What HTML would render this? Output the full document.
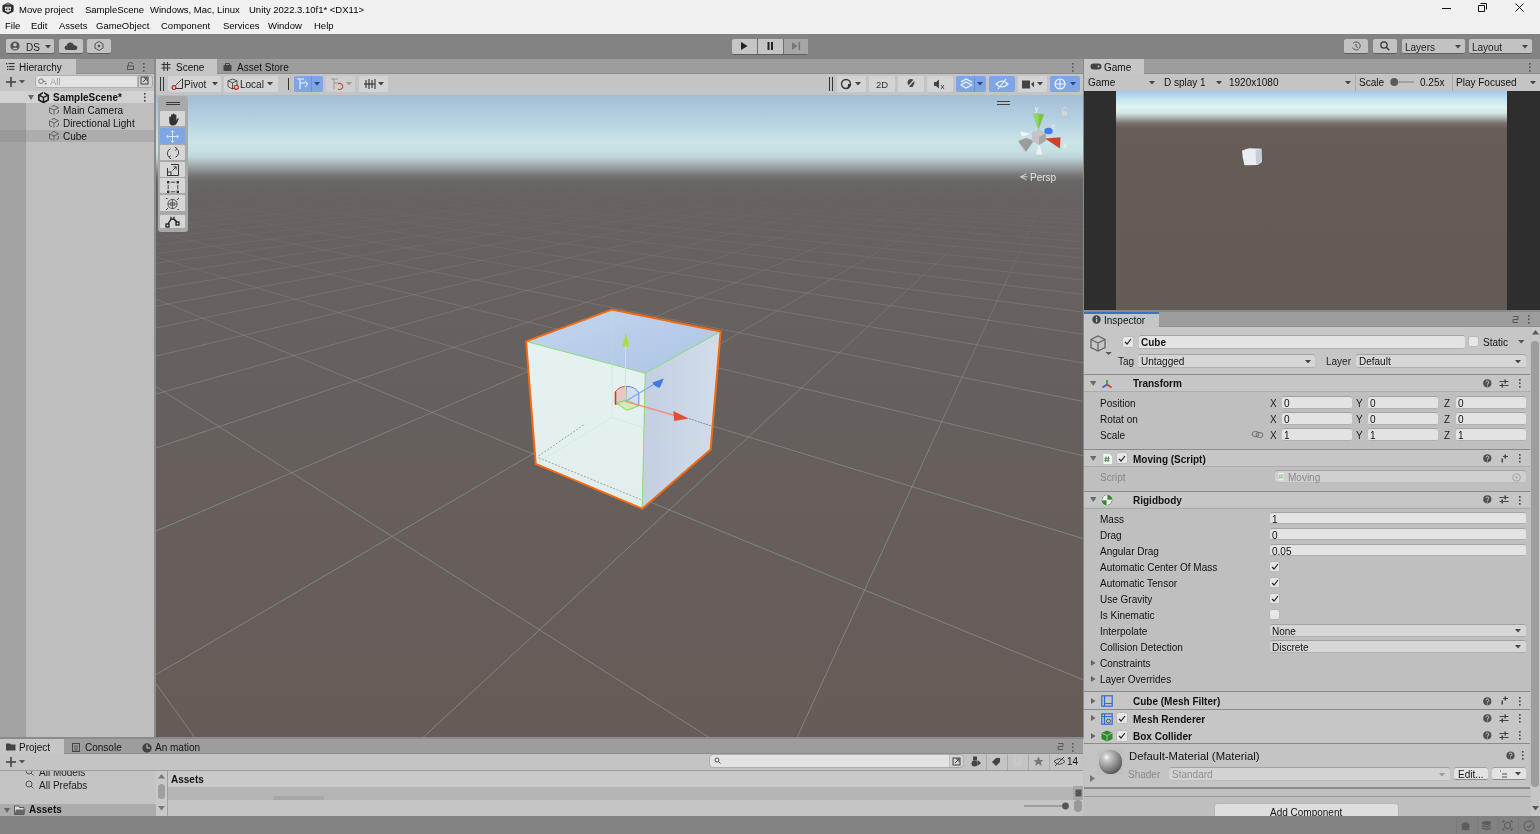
<!DOCTYPE html>
<html><head><meta charset="utf-8"><style>
html,body{margin:0;padding:0;width:1540px;height:834px;overflow:hidden;background:#c2c2c2;font-family:"Liberation Sans",sans-serif;}
body>div{position:absolute;}
.t{position:absolute;white-space:nowrap;line-height:1;will-change:transform;}
</style></head><body>
<div style="left:0px;top:0px;width:1540px;height:34px;background:#f0f0f0;"></div>
<svg style="position:absolute;left:2px;top:2px;" width="12" height="13" viewBox="0 0 12 13"><path d="M6 0.4L11.6 3.4V9.4L6 12.3L0.4 9.4V3.4Z" fill="#2a2a2a"/><path d="M6 0.4L9 2L6 3.5L3 2Z" fill="#777"/><path d="M3 4.8H9V8.8L6 10.6L3 8.8Z" fill="#dcdcdc"/><circle cx="4.5" cy="7.3" r="0.9" fill="#333"/><circle cx="7.5" cy="7.3" r="0.9" fill="#333"/><rect x="5.4" y="4.8" width="1.2" height="1.8" fill="#888"/></svg>
<div class="t" style="left:18.7px;top:5.1px;font-size:9.5px;color:#000;">Move project</div>
<div class="t" style="left:85.3px;top:5.1px;font-size:9.5px;color:#000;">SampleScene</div>
<div class="t" style="left:150.2px;top:5.1px;font-size:9.5px;color:#000;">Windows, Mac, Linux</div>
<div class="t" style="left:249.4px;top:5.1px;font-size:9.5px;color:#000;">Unity 2022.3.10f1* &lt;DX11&gt;</div>
<div class="t" style="left:5.3px;top:21.49px;font-size:9.5px;color:#000;">File</div>
<div class="t" style="left:31.2px;top:21.49px;font-size:9.5px;color:#000;">Edit</div>
<div class="t" style="left:58.9px;top:21.49px;font-size:9.5px;color:#000;">Assets</div>
<div class="t" style="left:96.1px;top:21.49px;font-size:9.5px;color:#000;">GameObject</div>
<div class="t" style="left:160.5px;top:21.49px;font-size:9.5px;color:#000;">Component</div>
<div class="t" style="left:223px;top:21.49px;font-size:9.5px;color:#000;">Services</div>
<div class="t" style="left:267.9px;top:21.49px;font-size:9.5px;color:#000;">Window</div>
<div class="t" style="left:314.3px;top:21.49px;font-size:9.5px;color:#000;">Help</div>
<svg style="position:absolute;left:1442px;top:8px;" width="10" height="2" viewBox="0 0 10 2"><rect width="9" height="1" fill="#111"/></svg>
<svg style="position:absolute;left:1478px;top:3px;" width="10" height="10" viewBox="0 0 10 10"><path d="M2.5 0.5H8.5V6.5M0.5 2.5H6.5V8.5H0.5Z" stroke="#111" fill="none" stroke-width="1"/></svg>
<svg style="position:absolute;left:1515px;top:3px;" width="10" height="10" viewBox="0 0 10 10"><path d="M0.5 0.5L8.5 8.5M8.5 0.5L0.5 8.5" stroke="#111" stroke-width="1"/></svg>
<div style="left:0px;top:34px;width:1540px;height:25px;background:#838383;"></div>
<div style="left:6px;top:38.6px;width:48px;height:14.600000000000001px;background:#c2c2c2;border-radius:2px;border-bottom:1px solid #5e5e5e"></div>
<div style="left:58.8px;top:38.6px;width:24.200000000000003px;height:14.600000000000001px;background:#c2c2c2;border-radius:2px;border-bottom:1px solid #5e5e5e"></div>
<div style="left:87px;top:38.6px;width:24px;height:14.600000000000001px;background:#c2c2c2;border-radius:2px;border-bottom:1px solid #5e5e5e"></div>
<svg style="position:absolute;left:10px;top:41px;" width="10" height="10" viewBox="0 0 10 10"><circle cx="5" cy="5" r="4.6" fill="#555"/><circle cx="5" cy="3.8" r="1.8" fill="#c5c5c5"/><path d="M2 8.2Q5 5.5 8 8.2" fill="#c5c5c5"/></svg>
<div class="t" style="left:26px;top:42.5px;font-size:10px;color:#222;">DS</div>
<svg style="position:absolute;left:45px;top:45px" width="6" height="3.5"><polygon points="0,0 6,0 3.0,3.5" fill="#444"/></svg>
<svg style="position:absolute;left:64px;top:41px;" width="14" height="10" viewBox="0 0 14 10"><path d="M3 9Q0.5 9 0.5 6.8Q0.5 4.8 2.8 4.6Q3.3 1.5 6.5 1.5Q9.2 1.5 10 4.2Q13.3 4.2 13.3 6.8Q13.3 9 11 9Z" fill="#444"/></svg>
<svg style="position:absolute;left:94px;top:41px;" width="10" height="10" viewBox="0 0 10 10"><path d="M5 0.5L9 2.8V7.2L5 9.5L1 7.2V2.8Z" stroke="#555" fill="none"/><circle cx="5" cy="5" r="1.3" fill="#555"/></svg>
<div style="left:731.5px;top:38.6px;width:76px;height:15px;border-radius:2px;background:#c5c5c5;border-bottom:1px solid #5e5e5e"></div>
<div style="left:757px;top:38.6px;width:1px;height:15.6px;background:#6e6e6e;"></div>
<div style="left:783px;top:38.6px;width:1px;height:15.6px;background:#6e6e6e;"></div>
<div style="left:783.5px;top:38.6px;width:24px;height:15.6px;background:#a6a6a6;"></div>
<svg style="position:absolute;left:741px;top:42px;" width="7" height="8" viewBox="0 0 7 8"><polygon points="0,0 6.5,4 0,8" fill="#222"/></svg>
<svg style="position:absolute;left:767px;top:42px;" width="7" height="8" viewBox="0 0 7 8"><rect x="0.5" width="2" height="8" fill="#222"/><rect x="4" width="2" height="8" fill="#222"/></svg>
<svg style="position:absolute;left:792px;top:42px;" width="9" height="8" viewBox="0 0 9 8"><polygon points="0,0 5.5,4 0,8" fill="#777"/><rect x="6.5" width="1.6" height="8" fill="#777"/></svg>
<div style="left:1343.6px;top:38.6px;width:24.700000000000045px;height:14.600000000000001px;background:#c2c2c2;border-radius:2px;border-bottom:1px solid #5e5e5e"></div>
<div style="left:1372.8px;top:38.6px;width:24.600000000000136px;height:14.600000000000001px;background:#c2c2c2;border-radius:2px;border-bottom:1px solid #5e5e5e"></div>
<div style="left:1401.6px;top:38.6px;width:63.30000000000018px;height:14.600000000000001px;background:#c2c2c2;border-radius:2px;border-bottom:1px solid #5e5e5e"></div>
<div style="left:1468.8px;top:38.6px;width:63.40000000000009px;height:14.600000000000001px;background:#c2c2c2;border-radius:2px;border-bottom:1px solid #5e5e5e"></div>
<svg style="position:absolute;left:1351px;top:41px;" width="10" height="10" viewBox="0 0 10 10"><path d="M2 2.5A4 4 0 1 1 1.5 6.5" stroke="#555" fill="none"/><path d="M5 2.8V5.3L6.8 6.5" stroke="#555" fill="none"/></svg>
<svg style="position:absolute;left:1380px;top:41px;" width="10" height="10" viewBox="0 0 10 10"><circle cx="4" cy="4" r="3.2" stroke="#333" fill="none" stroke-width="1.2"/><path d="M6.3 6.3L9.3 9.3" stroke="#333" stroke-width="1.3"/></svg>
<div class="t" style="left:1404.5px;top:42.5px;font-size:10px;color:#222;">Layers</div>
<svg style="position:absolute;left:1455px;top:45px" width="6" height="3.5"><polygon points="0,0 6,0 3.0,3.5" fill="#444"/></svg>
<div class="t" style="left:1472px;top:42.5px;font-size:10px;color:#222;">Layout</div>
<svg style="position:absolute;left:1522px;top:45px" width="6" height="3.5"><polygon points="0,0 6,0 3.0,3.5" fill="#444"/></svg>
<div style="left:0px;top:59px;width:1540px;height:15px;background:#9d9d9d;"></div>
<div style="left:0px;top:73px;width:1540px;height:1px;background:#8e8e8e;"></div>
<div style="left:0px;top:59px;width:76px;height:15px;background:#c6c6c6;"></div>
<svg style="position:absolute;left:6px;top:63px;" width="9" height="7" viewBox="0 0 9 7"><rect x="0" y="0" width="1.3" height="1.3" fill="#333"/><rect x="2.5" y="0" width="6" height="1.1" fill="#333"/><rect x="1" y="3" width="1.3" height="1.3" fill="#333"/><rect x="3" y="3" width="5.5" height="1.1" fill="#333"/><rect x="1" y="5.8" width="1.3" height="1.3" fill="#333"/><rect x="3" y="5.8" width="5.5" height="1.1" fill="#333"/></svg>
<div class="t" style="left:18.6px;top:63.4px;font-size:10px;color:#111;">Hierarchy</div>
<svg style="position:absolute;left:127px;top:62px;" width="7" height="8" viewBox="0 0 7 8"><rect x="0.5" y="4" width="6" height="3.5" stroke="#555" fill="none"/><path d="M1.5 4V2A2 2 0 0 1 5.5 2" stroke="#555" fill="none"/></svg>
<svg style="position:absolute;left:143px;top:63px;" width="2" height="9" viewBox="0 0 2 9"><rect x="0" y="0" width="1.6" height="1.6" fill="#555"/><rect x="0" y="3.5" width="1.6" height="1.6" fill="#555"/><rect x="0" y="7" width="1.6" height="1.6" fill="#555"/></svg>
<div style="left:0px;top:74px;width:154px;height:16.5px;background:#c4c4c4;"></div>
<svg style="position:absolute;left:5.5px;top:77px;" width="10" height="10" viewBox="0 0 10 10"><rect x="4.2" y="0" width="1.6" height="10" fill="#444"/><rect x="0" y="4.2" width="10" height="1.6" fill="#444"/></svg>
<svg style="position:absolute;left:18.8px;top:80.2px" width="6" height="3.5"><polygon points="0,0 6,0 3.0,3.5" fill="#555"/></svg>
<div style="left:35px;top:74.9px;width:101px;height:11.5px;background:#e2e2e2;border-radius:3px 0 0 3px;border:0.5px solid #b0b0b0"></div>
<svg style="position:absolute;left:37.5px;top:77.5px;" width="10" height="8" viewBox="0 0 10 8"><circle cx="3" cy="3.2" r="2.3" stroke="#777" fill="none"/><path d="M4.8 3.5H7.5" stroke="#777"/><polygon points="6.5,5 9,5 7.75,7" fill="#777"/></svg>
<div class="t" style="left:50px;top:77.09px;font-size:9.5px;color:#a0a0a0;">All</div>
<div style="left:137.7px;top:74.9px;width:13.5px;height:11.5px;background:#cfcfcf;border-radius:0 3px 3px 0;border:0.5px solid #a8a8a8"></div>
<svg style="position:absolute;left:140px;top:76.2px;" width="9" height="9" viewBox="0 0 9 9"><rect x="1" y="1" width="7" height="7" stroke="#444" fill="none"/><path d="M3 6L7 2M4 2H7V5" stroke="#444" fill="none"/></svg>
<div style="left:0px;top:90.5px;width:154px;height:647px;background:#bebebe;"></div>
<div style="left:0px;top:103px;width:26px;height:635px;background:#a3a3a3;"></div>
<div style="left:0px;top:90.5px;width:154px;height:12.5px;background:#d2d2d2;"></div>
<svg style="position:absolute;left:27.7px;top:94.5px" width="6" height="5"><polygon points="0,0 6,0 3.0,5" fill="#666"/></svg>
<svg style="position:absolute;left:38px;top:91.5px;" width="11" height="11" viewBox="0 0 11 11"><path d="M5.5 0.6L10.2 3.1V8L5.5 10.5L0.8 8V3.1Z" fill="none" stroke="#1a1a1a" stroke-width="1.6" stroke-linejoin="round"/><path d="M5.5 5.5V10M5.5 5.5L1.5 3.4M5.5 5.5L9.5 3.4" stroke="#1a1a1a" stroke-width="1.4"/><path d="M5.5 0.3V2.5" stroke="#fff" stroke-width="0.9"/></svg>
<div class="t" style="left:52.7px;top:93.1px;font-size:10px;color:#111;font-weight:bold;">SampleScene*</div>
<svg style="position:absolute;left:144px;top:93px;" width="2" height="9" viewBox="0 0 2 9"><rect x="0" y="0" width="1.6" height="1.6" fill="#444"/><rect x="0" y="3.5" width="1.6" height="1.6" fill="#444"/><rect x="0" y="7" width="1.6" height="1.6" fill="#444"/></svg>
<div style="left:26px;top:129.5px;width:128px;height:12.5px;background:#adadad;"></div>
<div style="left:0px;top:129.5px;width:26px;height:12.5px;background:#989898;"></div>
<svg style="position:absolute;left:49px;top:104.5px;" width="10" height="10" viewBox="0 0 10 10"><path d="M2.5 1.6L5 0.5L9.5 2.8L5 5L0.5 2.8V7.5L3 8.7M5 5V9.6M7.5 8.5L9.5 7.5V5" stroke="#555" fill="none" stroke-width="0.9"/></svg>
<div class="t" style="left:62.6px;top:105.6px;font-size:10px;color:#111;">Main Camera</div>
<svg style="position:absolute;left:49px;top:117.5px;" width="10" height="10" viewBox="0 0 10 10"><path d="M2.5 1.6L5 0.5L9.5 2.8L5 5L0.5 2.8V7.5L3 8.7M5 5V9.6M7.5 8.5L9.5 7.5V5" stroke="#555" fill="none" stroke-width="0.9"/></svg>
<div class="t" style="left:62.6px;top:118.6px;font-size:10px;color:#111;">Directional Light</div>
<svg style="position:absolute;left:49px;top:130.5px;" width="10" height="10" viewBox="0 0 10 10"><path d="M2.5 1.6L5 0.5L9.5 2.8L5 5L0.5 2.8V7.5L3 8.7M5 5V9.6M7.5 8.5L9.5 7.5V5" stroke="#555" fill="none" stroke-width="0.9"/></svg>
<div class="t" style="left:62.6px;top:131.6px;font-size:10px;color:#111;">Cube</div>
<div style="left:154px;top:59px;width:2px;height:679px;background:#8b8b8b;"></div>
<div style="left:156px;top:59px;width:61px;height:15px;background:#c6c6c6;"></div>
<svg style="position:absolute;left:161px;top:62px;" width="10" height="9" viewBox="0 0 10 9"><path d="M3 0V9M6.5 0V9M0.5 2.5H9.5M0.5 6H9.5" stroke="#333" stroke-width="1.1"/></svg>
<div class="t" style="left:176px;top:63.4px;font-size:10px;color:#111;">Scene</div>
<svg style="position:absolute;left:223px;top:62px;" width="9" height="9" viewBox="0 0 9 9"><rect x="0.5" y="3" width="8" height="6" fill="#444"/><path d="M2.5 3V1.5H6.5V3" stroke="#444" fill="none"/></svg>
<div class="t" style="left:237px;top:63.4px;font-size:10px;color:#111;">Asset Store</div>
<svg style="position:absolute;left:1071.5px;top:63px;" width="2" height="9" viewBox="0 0 2 9"><rect x="0" y="0" width="1.6" height="1.6" fill="#555"/><rect x="0" y="3.5" width="1.6" height="1.6" fill="#555"/><rect x="0" y="7" width="1.6" height="1.6" fill="#555"/></svg>
<div style="left:156px;top:74px;width:927px;height:21px;background:#c4c4c4;"></div>
<svg style="position:absolute;left:159.5px;top:77px;" width="5" height="14" viewBox="0 0 5 14"><rect x="0" width="1" height="14" fill="#333"/><rect x="3" width="1" height="14" fill="#333"/></svg>
<div style="left:168px;top:76px;width:52.5px;height:15.6px;background:#d4d4d4;border-radius:2px"></div>
<div style="left:224px;top:76px;width:53.60000000000002px;height:15.6px;background:#d4d4d4;border-radius:2px"></div>
<div style="left:294px;top:76px;width:28.80000000000001px;height:15.6px;background:#7ea6e6;border-radius:2px"></div>
<div style="left:311px;top:76px;width:0.8px;height:15.6px;background:#6a95d8;"></div>
<div style="left:326.3px;top:76px;width:29.19999999999999px;height:15.6px;background:#cfcfcf;border-radius:2px"></div>
<div style="left:359.4px;top:76px;width:28.30000000000001px;height:15.6px;background:#d4d4d4;border-radius:2px"></div>
<svg style="position:absolute;left:171px;top:78px;" width="14" height="13" viewBox="0 0 14 13"><path d="M4.5 7.5L10.5 1.5" stroke="#333" fill="none" stroke-width="0.9"/><path d="M11.5 0.5V10.5H5" stroke="#333" fill="none" stroke-width="1"/><circle cx="3" cy="9.6" r="1.9" stroke="#d02020" fill="none" stroke-width="1.2"/></svg>
<div class="t" style="left:184px;top:79.9px;font-size:10px;color:#222;">Pivot</div>
<svg style="position:absolute;left:212px;top:82px" width="6" height="3.5"><polygon points="0,0 6,0 3.0,3.5" fill="#444"/></svg>
<svg style="position:absolute;left:226.5px;top:77.5px;" width="14" height="13" viewBox="0 0 14 13"><path d="M5.5 1L10 2.8V8.5L5.5 11L1 8.5V2.8Z M1 2.8L5.5 4.8L10 2.8M5.5 4.8V11" stroke="#444" fill="none" stroke-width="0.9"/><circle cx="9.3" cy="9.3" r="2" stroke="#d02020" fill="#d4d4d4" stroke-width="1.2"/></svg>
<div class="t" style="left:240px;top:79.9px;font-size:10px;color:#222;">Local</div>
<svg style="position:absolute;left:267px;top:82px" width="6" height="3.5"><polygon points="0,0 6,0 3.0,3.5" fill="#444"/></svg>
<div style="left:288px;top:78px;width:1px;height:12px;background:#333;"></div>
<svg style="position:absolute;left:296px;top:78px;" width="13" height="12" viewBox="0 0 13 12"><path d="M1 1H8M4 1V11M4 5H9M9 3L11.5 6L9 9" stroke="#f0f4ff" fill="none" stroke-width="1.1"/></svg>
<svg style="position:absolute;left:314px;top:82px" width="6" height="3.5"><polygon points="0,0 6,0 3.0,3.5" fill="#2d4a80"/></svg>
<svg style="position:absolute;left:330px;top:78px;" width="14" height="12" viewBox="0 0 14 12"><path d="M1 1H8M4 1V11M4 5H9" stroke="#999" fill="none"/><path d="M8 6A3 3 0 1 1 8 11" stroke="#d05050" fill="none" stroke-width="1.2"/></svg>
<svg style="position:absolute;left:346px;top:82px" width="6" height="3.5"><polygon points="0,0 6,0 3.0,3.5" fill="#999"/></svg>
<svg style="position:absolute;left:363px;top:78px;" width="13" height="12" viewBox="0 0 13 12"><path d="M1 6H12M3 2V10M6 1V11M9 2V10M12 1V11" stroke="#222" stroke-width="1"/></svg>
<svg style="position:absolute;left:378px;top:82px" width="6" height="3.5"><polygon points="0,0 6,0 3.0,3.5" fill="#444"/></svg>
<svg style="position:absolute;left:828.6px;top:77px;" width="5" height="14" viewBox="0 0 5 14"><rect x="0" width="1" height="14" fill="#333"/><rect x="3" width="1" height="14" fill="#333"/></svg>
<div style="left:837.2px;top:76px;width:28.399999999999977px;height:15.6px;background:#d4d4d4;border-radius:2px"></div>
<div style="left:869px;top:76px;width:25.899999999999977px;height:15.6px;background:#d4d4d4;border-radius:2px"></div>
<div style="left:898.3px;top:76px;width:25.5px;height:15.6px;background:#d4d4d4;border-radius:2px"></div>
<div style="left:927.2px;top:76px;width:25.59999999999991px;height:15.6px;background:#d4d4d4;border-radius:2px"></div>
<div style="left:956.3px;top:76px;width:29.40000000000009px;height:15.6px;background:#7ea6e6;border-radius:2px"></div>
<div style="left:974.4px;top:76px;width:0.8px;height:15.6px;background:#6a95d8;"></div>
<div style="left:989.2px;top:76px;width:25.59999999999991px;height:15.6px;background:#7ea6e6;border-radius:2px"></div>
<div style="left:1017.9px;top:76px;width:28.899999999999977px;height:15.6px;background:#d4d4d4;border-radius:2px"></div>
<div style="left:1050.2px;top:76px;width:29.59999999999991px;height:15.6px;background:#7ea6e6;border-radius:2px"></div>
<svg style="position:absolute;left:840px;top:78px;" width="12" height="12" viewBox="0 0 12 12"><circle cx="6" cy="6" r="4.5" stroke="#333" fill="none" stroke-width="1.3"/><path d="M6 10.5A4.5 4.5 0 0 0 10.5 6L8 6A2 4 0 0 1 6 10.5Z" fill="#333"/></svg>
<svg style="position:absolute;left:855px;top:82px" width="6" height="3.5"><polygon points="0,0 6,0 3.0,3.5" fill="#444"/></svg>
<div class="t" style="left:875.5px;top:80.09px;font-size:9.5px;color:#333;">2D</div>
<svg style="position:absolute;left:906px;top:78px;" width="10" height="12" viewBox="0 0 10 12"><path d="M5 1A3.5 3.5 0 0 1 7.5 7L6.5 9H3.5L2.5 7A3.5 3.5 0 0 1 5 1Z" fill="#444"/><path d="M1 10L9 1" stroke="#d4d4d4" stroke-width="1.2"/></svg>
<svg style="position:absolute;left:933px;top:78px;" width="14" height="12" viewBox="0 0 14 12"><path d="M1 4H3L6 1.5V10.5L3 8H1Z" fill="#444"/><path d="M8 7L11 11M11 7L8 11" stroke="#444" stroke-width="0.9"/></svg>
<svg style="position:absolute;left:960px;top:78px;" width="13" height="12" viewBox="0 0 13 12"><path d="M1 7L6 4L12 7L6 10Z M1 4L6 1L12 4" stroke="#f4f6ff" fill="none" stroke-width="1.1"/></svg>
<svg style="position:absolute;left:976.5px;top:82px" width="6" height="3.5"><polygon points="0,0 6,0 3.0,3.5" fill="#2d4a80"/></svg>
<svg style="position:absolute;left:995px;top:78px;" width="14" height="12" viewBox="0 0 14 12"><path d="M1 6Q7 0 13 6Q7 12 1 6Z M3 11L11 1" stroke="#f4f6ff" fill="none" stroke-width="1.1"/></svg>
<svg style="position:absolute;left:1021px;top:78px;" width="14" height="12" viewBox="0 0 14 12"><rect x="1" y="2.5" width="8" height="8" fill="#444"/><path d="M10 6L13 3.5V9.5Z" fill="#444"/></svg>
<svg style="position:absolute;left:1037px;top:82px" width="6" height="3.5"><polygon points="0,0 6,0 3.0,3.5" fill="#444"/></svg>
<svg style="position:absolute;left:1053px;top:77px;" width="14" height="14" viewBox="0 0 14 14"><circle cx="7" cy="7" r="5" stroke="#f4f6ff" fill="none" stroke-width="1.2"/><path d="M2 7H12M7 2V12" stroke="#f4f6ff" stroke-width="1"/></svg>
<svg style="position:absolute;left:1069.5px;top:82px" width="6" height="3.5"><polygon points="0,0 6,0 3.0,3.5" fill="#2d4a80"/></svg>
<div style="left:1083px;top:59px;width:1px;height:679px;background:#8b8b8b;"></div>
<div style="left:1084px;top:59px;width:60px;height:15px;background:#c6c6c6;"></div>
<svg style="position:absolute;left:1090px;top:63px;" width="12" height="7" viewBox="0 0 12 7"><rect x="0.5" y="0.5" width="11" height="6" rx="3" fill="#444"/><circle cx="8.5" cy="3.5" r="1" fill="#c6c6c6"/></svg>
<div class="t" style="left:1104px;top:63.4px;font-size:10px;color:#111;">Game</div>
<svg style="position:absolute;left:1528.5px;top:63px;" width="2" height="9" viewBox="0 0 2 9"><rect x="0" y="0" width="1.6" height="1.6" fill="#555"/><rect x="0" y="3.5" width="1.6" height="1.6" fill="#555"/><rect x="0" y="7" width="1.6" height="1.6" fill="#555"/></svg>
<div style="left:1084px;top:74px;width:456px;height:16.5px;background:#c4c4c4;"></div>
<div class="t" style="left:1088px;top:78.4px;font-size:10px;color:#111;">Game</div>
<svg style="position:absolute;left:1149px;top:80.5px" width="6" height="3.5"><polygon points="0,0 6,0 3.0,3.5" fill="#444"/></svg>
<div class="t" style="left:1164px;top:78.4px;font-size:10px;color:#111;">D splay 1</div>
<svg style="position:absolute;left:1216px;top:80.5px" width="6" height="3.5"><polygon points="0,0 6,0 3.0,3.5" fill="#444"/></svg>
<div class="t" style="left:1229px;top:78.4px;font-size:10px;color:#111;">1920x1080</div>
<svg style="position:absolute;left:1345px;top:80.5px" width="6" height="3.5"><polygon points="0,0 6,0 3.0,3.5" fill="#444"/></svg>
<div style="left:1354.5px;top:74px;width:1px;height:16.5px;background:#aaa;"></div>
<div style="left:1452.4px;top:74px;width:1px;height:16.5px;background:#aaa;"></div>
<div class="t" style="left:1359px;top:78.4px;font-size:10px;color:#111;">Scale</div>
<svg style="position:absolute;left:1388px;top:77px;" width="30" height="10" viewBox="0 0 30 10"><line x1="4" y1="5" x2="26" y2="5" stroke="#666" stroke-width="0.7"/><circle cx="6.2" cy="5" r="3.9" fill="#5a5a5a"/></svg>
<div class="t" style="left:1419.5px;top:78.4px;font-size:10px;color:#111;">0.25x</div>
<div class="t" style="left:1456px;top:78.4px;font-size:10px;color:#111;">Play Focused</div>
<svg style="position:absolute;left:1530px;top:80.5px" width="6" height="3.5"><polygon points="0,0 6,0 3.0,3.5" fill="#444"/></svg>
<div style="left:1084px;top:90.5px;width:456px;height:219.5px;background:#2e2e2e;"></div>
<div style="left:1116px;top:90.5px;width:391.3px;height:219.5px;background:linear-gradient(#a4c8e8 0px,#c4e4f0 8px,#e0f4f2 16px,#d4e6e4 22px,#a9b2b0 27px,#7b726d 32px,#685f59 37px,#655c56 60px,#645b55 219px)"></div>
<svg style="position:absolute;left:1240px;top:146px;" width="24" height="21" viewBox="0 0 24 21"><path d="M2 4.8L6 3L9.5 2.2L16 2.5L21.3 2.8L22 15.8L17.5 19L4.5 19.2L2.8 12Z" fill="#e8edf2"/><path d="M15.5 4L21.3 2.8L22 15.8L17.5 19L16.2 18.5Z" fill="#c6ceda"/></svg>
<div style="left:1084px;top:310px;width:456px;height:2px;background:#8a8a8a;"></div>
<svg width="927" height="643" viewBox="156 95 927 643" style="position:absolute;left:156px;top:95px"><defs><linearGradient id="sky" x1="0" y1="95" x2="0" y2="738" gradientUnits="userSpaceOnUse"><stop offset="0.0000" stop-color="#a3bdd4"/><stop offset="0.0311" stop-color="#b2cce0"/><stop offset="0.0731" stop-color="#c9e5e8"/><stop offset="0.0871" stop-color="#c6e0e3"/><stop offset="0.0980" stop-color="#bcd2d5"/><stop offset="0.1073" stop-color="#a6b0b2"/><stop offset="0.1166" stop-color="#8e9294"/><stop offset="0.1244" stop-color="#797777"/><stop offset="0.1337" stop-color="#696665"/><stop offset="0.1633" stop-color="#676261"/><stop offset="1.0000" stop-color="#655c57"/></linearGradient><linearGradient id="gfade" x1="0" y1="150" x2="0" y2="738" gradientUnits="userSpaceOnUse"><stop offset="0" stop-color="#fff" stop-opacity="0"/><stop offset="0.068" stop-color="#fff" stop-opacity="0"/><stop offset="0.153" stop-color="#fff" stop-opacity="0.22"/><stop offset="0.255" stop-color="#fff" stop-opacity="0.5"/><stop offset="0.425" stop-color="#fff" stop-opacity="0.8"/><stop offset="0.63" stop-color="#fff" stop-opacity="1"/></linearGradient><mask id="gm"><rect x="0" y="0" width="2000" height="1000" fill="url(#gfade)"/></mask></defs><rect x="156" y="95" width="927" height="643" fill="url(#sky)"/><g mask="url(#gm)"><path d="M-96837.3 3807.5L529.4 158.6M-94546.1 3807.5L536.9 158.8M-92255.0 3807.5L544.5 159.0M-89963.9 3807.5L552.3 159.2M-87672.7 3807.5L560.3 159.5M-85381.6 3807.5L568.4 159.7M-83090.4 3807.5L576.7 159.9M-43567.9 1811.2L-95277.7 3807.5M-80799.3 3807.5L585.1 160.1M-20193.3 935.2L-92126.9 3807.5M-78508.1 3807.5L593.8 160.3M-12885.2 661.4L-88976.1 3807.5M-76217.0 3807.5L602.6 160.6M-9315.4 527.6L-85825.3 3807.5M-73925.9 3807.5L611.6 160.8M-7199.9 448.3L-82674.4 3807.5M-71634.7 3807.5L620.8 161.1M-5800.2 395.8L-79523.6 3807.5M-69343.6 3807.5L630.2 161.3M-4805.7 358.6L-76372.8 3807.5M-67052.4 3807.5L639.8 161.6M-4062.7 330.7L-73221.9 3807.5M-64761.3 3807.5L649.7 161.8M-3486.5 309.1L-70071.1 3807.5M-62470.1 3807.5L659.7 162.1M-3026.5 291.9L-66920.3 3807.5M-60179.0 3807.5L670.0 162.4M-2650.9 277.8L-63769.4 3807.5M-57887.9 3807.5L680.5 162.7M-2338.3 266.1L-60618.6 3807.5M-55596.7 3807.5L691.3 162.9M-2074.2 256.2L-57467.8 3807.5M-53305.6 3807.5L702.3 163.2M-1848.0 247.7L-54317.0 3807.5M-51014.4 3807.5L713.6 163.5M-1652.2 240.4L-51166.1 3807.5M-48723.3 3807.5L725.2 163.8M-1481.0 234.0L-48015.3 3807.5M-46432.1 3807.5L737.1 164.2M-1330.1 228.3L-44864.5 3807.5M-44141.0 3807.5L749.2 164.5M-1196.0 223.3L-41713.6 3807.5M-41849.9 3807.5L761.7 164.8M-1076.1 218.8L-38562.8 3807.5M-39558.7 3807.5L774.5 165.1M-968.2 214.8L-35412.0 3807.5M-37267.6 3807.5L787.6 165.5M-870.7 211.1L-32261.1 3807.5M-34976.4 3807.5L801.0 165.9M-782.0 207.8L-29110.3 3807.5M-32685.3 3807.5L814.8 166.2M-701.1 204.8L-25959.5 3807.5M-30394.1 3807.5L829.0 166.6M-627.0 202.0L-22808.7 3807.5M-28103.0 3807.5L843.6 167.0M-558.8 199.4L-19657.8 3807.5M-25811.8 3807.5L858.6 167.4M-495.9 197.1L-16507.0 3807.5M-23520.7 3807.5L874.0 167.8M-437.6 194.9L-13356.2 3807.5M-21229.6 3807.5L889.8 168.2M-383.5 192.9L-10205.3 3807.5M-18938.4 3807.5L906.1 168.6M-333.2 191.0L-7054.5 3807.5M-16647.3 3807.5L922.9 169.1M-286.2 189.2L-3903.7 3807.5M-14356.1 3807.5L940.2 169.6M-242.3 187.6L-752.9 3807.5M-12065.0 3807.5L958.0 170.0M-201.1 186.0L2398.0 3807.5M-9773.8 3807.5L976.4 170.5M-162.5 184.6L5548.8 3807.5M-7482.7 3807.5L995.3 171.0M-126.1 183.2L8699.6 3807.5M-5191.6 3807.5L1014.8 171.5M-91.8 181.9L11850.5 3807.5M-2900.4 3807.5L1035.0 172.1M-59.4 180.7L15001.3 3807.5M-609.3 3807.5L1055.8 172.6M-28.7 179.6L18152.1 3807.5M1681.9 3807.5L1077.3 173.2M0.3 178.5L21303.0 3807.5M3973.0 3807.5L1099.6 173.8M27.8 177.4L24453.8 3807.5M6264.2 3807.5L1122.6 174.4M54.0 176.5L27604.6 3807.5M8555.3 3807.5L1146.4 175.0M78.8 175.5L30755.4 3807.5M10846.4 3807.5L1171.1 175.7M102.5 174.6L33906.3 3807.5M13137.6 3807.5L1196.6 176.4M125.1 173.8L37057.1 3807.5M15428.7 3807.5L1223.1 177.1M146.7 173.0L40207.9 3807.5M17719.9 3807.5L1250.6 177.8M167.3 172.2L43358.8 3807.5M20011.0 3807.5L1279.2 178.6M186.9 171.5L46509.6 3807.5M22302.2 3807.5L1308.9 179.3M205.8 170.8L49660.4 3807.5M24593.3 3807.5L1339.8 180.2M223.9 170.1L52811.2 3807.5M26884.4 3807.5L1371.9 181.0M241.2 169.4L55962.1 3807.5M29175.6 3807.5L1405.4 181.9M257.8 168.8L59112.9 3807.5M31466.7 3807.5L1440.3 182.8M273.8 168.2L62263.7 3807.5M33757.9 3807.5L1476.7 183.8M289.2 167.6L65414.6 3807.5M36049.0 3807.5L1514.7 184.8M304.0 167.1L68565.4 3807.5M38340.2 3807.5L1554.5 185.9M318.2 166.6L71716.2 3807.5M40631.3 3807.5L1596.1 187.0M331.9 166.0L74867.1 3807.5M42922.4 3807.5L1639.7 188.1M345.2 165.5L78017.9 3807.5M45213.6 3807.5L1685.4 189.3M357.9 165.1L81168.7 3807.5M47504.7 3807.5L1733.4 190.6M370.2 164.6L84319.5 3807.5M49795.9 3807.5L1783.8 192.0M382.2 164.2L49104.8 2202.5M52087.0 3807.5L1837.0 193.4M393.7 163.7L21456.5 1014.3M54378.2 3807.5L1892.9 194.9M404.8 163.3L14009.4 694.3M56669.3 3807.5L1952.0 196.4M415.6 162.9L10547.6 545.5M58960.4 3807.5L2014.5 198.1M426.0 162.5L8547.3 459.6M61251.6 3807.5L2080.6 199.8M436.1 162.1L7244.3 403.6M63542.7 3807.5L2150.8 201.7M445.9 161.8L6328.0 364.2M65833.9 3807.5L2225.3 203.7M455.4 161.4L5648.7 335.0M68125.0 3807.5L2304.6 205.8M464.6 161.1L5124.8 312.5M70416.2 3807.5L2389.2 208.0M473.5 160.7L4708.5 294.6M72707.3 3807.5L2479.7 210.4M482.2 160.4L4369.8 280.1M74998.5 3807.5L2576.6 213.0M490.6 160.1L4088.8 268.0M77289.6 3807.5L2680.7 215.8M498.8 159.8L3851.9 257.8M79580.7 3807.5L2792.8 218.8M506.8 159.5L3649.5 249.1M81871.9 3807.5L2913.8 222.0M514.5 159.2L3474.6 241.6M84163.0 3807.5L3044.9 225.5M522.1 158.9L3321.9 235.0M86454.2 3807.5L3187.4 229.3M529.4 158.6L3187.4 229.3" stroke="#aaa7a3" stroke-opacity="0.55" stroke-width="0.9" stroke-dasharray="3 1" fill="none"/></g><defs><linearGradient id="ltop" x1="0" y1="0" x2="1" y2="1"><stop offset="0" stop-color="#c4d6ee"/><stop offset="1" stop-color="#adc4e6"/></linearGradient><linearGradient id="lleft" x1="0" y1="0" x2="0" y2="1"><stop offset="0" stop-color="#e6f1f1"/><stop offset="1" stop-color="#e2eeee"/></linearGradient><linearGradient id="lright" x1="0" y1="0" x2="1" y2="0"><stop offset="0" stop-color="#c3cfe2"/><stop offset="1" stop-color="#d2dcea"/></linearGradient></defs><polygon points="526.1,341.4 645.2,373.2 720.6,331.6 611.6,309.6" fill="url(#ltop)"/><polygon points="526.1,341.4 645.2,373.2 642.2,508.7 535.7,463.8" fill="url(#lleft)"/><polygon points="645.2,373.2 720.6,331.6 710.6,449.6 642.2,508.7" fill="url(#lright)"/><path d="M538.7 455.8L585 424M538.7 457.8L642 500" stroke="#8f8f8f" stroke-width="1" stroke-dasharray="2 1.5" fill="none" opacity="0.8"/><path d="M526.1 341.4L645.2 373.2L720.6 331.6M645.2 373.2L642.2 508.7" stroke="#8ee27a" stroke-width="1" fill="none"/><path d="M611.6 309.6L612.3 417.3L535.7 463.8M612.3 417.3L710.6 449.6" stroke="#bfe8b0" stroke-width="0.8" stroke-opacity="0.5" fill="none"/><polygon points="526.1,341.4 611.6,309.6 720.6,331.6 710.6,449.6 642.2,508.7 535.7,463.8" fill="none" stroke="#f26a12" stroke-width="2" stroke-linejoin="round"/><path d="M615.5 404.4V391.5Q619 386.8 626 386.4V401.4Z" fill="#e6c0bc" fill-opacity="0.85" stroke="#d0443c" stroke-width="0.9"/><path d="M615.5 404.4V391.5" stroke="#c83a30" stroke-width="1.6"/><path d="M626 386.4Q635 386 638.8 393V405.5L625.3 401.4Z" fill="#c4d4f4" fill-opacity="0.6" stroke="#4a7ee6" stroke-width="0.9"/><path d="M616.3 402.9L626.8 410.4L638.8 405.9L626.8 399.9Z" fill="#cdf0a8" fill-opacity="0.85" stroke="#86d05a" stroke-width="0.9"/><line x1="625.3" y1="401.4" x2="625.6" y2="345" stroke="#d4f08a" stroke-width="1"/><polygon points="622,346.5 625.9,332.4 629.3,346.5" fill="#a8de4c"/><line x1="625.3" y1="401.4" x2="656" y2="383" stroke="#78a8f0" stroke-width="1.2"/><path d="M652.5 382.5L663.8 378.5L659.8 387.8Q655 387.5 652.5 382.5Z" fill="#3f7ae0"/><line x1="625.3" y1="401.4" x2="675" y2="415.5" stroke="#f2907e" stroke-width="1.3"/><polygon points="673.3,411 688.8,418.6 674.2,421" fill="#e44e34"/><line x1="689" y1="418.6" x2="713.7" y2="426.8" stroke="#8c8c8c" stroke-width="1" stroke-dasharray="2 1"/></svg>
<div style="left:1084px;top:312px;width:456px;height:504.5px;background:#bfbfbf;"></div>
<div style="left:1084px;top:312px;width:456px;height:14.5px;background:#9d9d9d;"></div>
<div style="left:1084px;top:325.5px;width:456px;height:1px;background:#8e8e8e;"></div>
<div style="left:1084px;top:312px;width:75px;height:14.5px;background:#c6c6c6;"></div>
<div style="left:1084px;top:312px;width:75px;height:2px;background:#3a72c0;"></div>
<svg style="position:absolute;left:1092px;top:315px;" width="9" height="9" viewBox="0 0 9 9"><circle cx="4.5" cy="4.5" r="4.2" fill="#444"/><rect x="3.9" y="3.8" width="1.3" height="3.4" fill="#c6c6c6"/><rect x="3.9" y="1.8" width="1.3" height="1.2" fill="#c6c6c6"/></svg>
<div class="t" style="left:1103.5px;top:316.4px;font-size:10px;color:#111;">Inspector</div>
<svg style="position:absolute;left:1511.5px;top:315px;" width="7" height="8" viewBox="0 0 7 8"><path d="M1 1.5H6V4.5H1V7.5H6" stroke="#555" fill="none"/></svg>
<svg style="position:absolute;left:1528.2px;top:315px;" width="2" height="9" viewBox="0 0 2 9"><rect x="0" y="0" width="1.6" height="1.6" fill="#555"/><rect x="0" y="3.5" width="1.6" height="1.6" fill="#555"/><rect x="0" y="7" width="1.6" height="1.6" fill="#555"/></svg>
<div style="left:1530.5px;top:326.5px;width:9.5px;height:490px;background:#c6c6c6;"></div>
<div style="left:1531px;top:341px;width:8px;height:446px;background:#9d9d9d;border-radius:4px"></div>
<svg style="position:absolute;left:1532px;top:330px;" width="7" height="5" viewBox="0 0 7 5"><polygon points="0,4.5 3.5,0 7,4.5" fill="#555"/></svg>
<svg style="position:absolute;left:1532px;top:806px;" width="7" height="5" viewBox="0 0 7 5"><polygon points="0,0 3.5,4.5 7,0" fill="#555"/></svg>
<div style="left:1084px;top:326.5px;width:446px;height:47.5px;background:#c6c6c6;"></div>
<svg style="position:absolute;left:1090px;top:335px;" width="24" height="22" viewBox="0 0 24 22"><path d="M8 1L15 4.5V12.5L8 16L1 12.5V4.5Z M1 4.5L8 8L15 4.5M8 8V16" stroke="#666" fill="none" stroke-width="1.3"/><polygon points="15.5,17 21.7,17 18.6,20" fill="#555"/></svg>
<div style="left:1122.6px;top:336.7px;width:10.5px;height:10px;background:#e6e6e6;border-radius:1.5px;box-shadow:0 0 0 0.5px #b0b0b0"></div>
<svg style="position:absolute;left:1124.1px;top:338.2px;" width="8" height="7" viewBox="0 0 8 7"><path d="M1 3.8L3 6L7 1" stroke="#222" fill="none" stroke-width="1.2"/></svg>
<div style="left:1139px;top:335px;width:325.5px;height:12.5px;background:#e3e3e3;border-radius:2px;border-bottom:1px solid #b0b0b0;box-shadow:inset 0 1px 0 #a2a2a2;"></div>
<div class="t" style="left:1140.8px;top:338.4px;font-size:10px;color:#111;font-weight:bold;">Cube</div>
<div style="left:1468.7px;top:337px;width:9.5px;height:9.3px;background:#e6e6e6;border-radius:1.5px;box-shadow:0 0 0 0.5px #b0b0b0"></div>
<div class="t" style="left:1482.7px;top:338.4px;font-size:10px;color:#111;">Static</div>
<svg style="position:absolute;left:1518px;top:340px" width="6.5" height="3.5"><polygon points="0,0 6.5,0 3.25,3.5" fill="#555"/></svg>
<div class="t" style="left:1117.5px;top:357.4px;font-size:10px;color:#222;">Tag</div>
<div style="left:1138.2px;top:354.3px;width:176.79999999999995px;height:12.5px;background:#d6d6d6;border-radius:2px;border-bottom:1px solid #b0b0b0;box-shadow:inset 0 1px 0 #a2a2a2;"></div>
<div class="t" style="left:1141px;top:357.4px;font-size:10px;color:#111;">Untagged</div>
<svg style="position:absolute;left:1305px;top:359.5px" width="6" height="3.5"><polygon points="0,0 6,0 3.0,3.5" fill="#444"/></svg>
<div class="t" style="left:1326.4px;top:357.4px;font-size:10px;color:#222;">Layer</div>
<div style="left:1356px;top:354.3px;width:169.79999999999995px;height:12.5px;background:#d6d6d6;border-radius:2px;border-bottom:1px solid #b0b0b0;box-shadow:inset 0 1px 0 #a2a2a2;"></div>
<div class="t" style="left:1359px;top:357.4px;font-size:10px;color:#111;">Default</div>
<svg style="position:absolute;left:1515px;top:359.5px" width="6" height="3.5"><polygon points="0,0 6,0 3.0,3.5" fill="#444"/></svg>
<div style="left:1084px;top:373.8px;width:446px;height:1.3px;background:#8a8a8a;"></div>
<div style="left:1084px;top:375.1px;width:446px;height:15.899999999999977px;background:#c6c6c6;"></div>
<svg style="position:absolute;left:1089.5px;top:380.55px" width="6.5" height="5"><polygon points="0,0 6.5,0 3.25,5" fill="#6a6a6a"/></svg>
<svg style="position:absolute;left:1101px;top:379px" width="12" height="10"><path d="M6 1V5.5" stroke="#3aa03a" stroke-width="1.8"/><path d="M6 5.5L1.5 8.5" stroke="#2e6ad6" stroke-width="1.8"/><path d="M6 5.5L10.5 8.5" stroke="#d83a2a" stroke-width="1.8"/></svg>
<div class="t" style="left:1132.6px;top:379.15px;font-size:10px;color:#111;font-weight:bold;">Transform</div>
<svg style="position:absolute;left:1482.7px;top:378.75px;" width="9" height="9" viewBox="0 0 9 9"><circle cx="4.3" cy="4.3" r="4.1" fill="#505050"/><path d="M3 3.2A1.4 1.4 0 1 1 4.4 4.8V5.6" stroke="#c8c8c8" fill="none" stroke-width="1"/><rect x="3.9" y="6.6" width="1" height="1" fill="#c8c8c8"/></svg>
<svg style="position:absolute;left:1498.5px;top:378.55px;" width="10" height="9" viewBox="0 0 10 9"><path d="M0.5 2.5H9.5M0.5 6.5H9.5" stroke="#444" stroke-width="1.1"/><rect x="5.5" y="0.5" width="1.5" height="4" fill="#444"/><rect x="2.5" y="4.5" width="1.5" height="4" fill="#444"/></svg>
<svg style="position:absolute;left:1518.5px;top:378.85px;" width="2" height="9" viewBox="0 0 2 9"><rect x="0" y="0" width="1.6" height="1.6" fill="#444"/><rect x="0" y="3.5" width="1.6" height="1.6" fill="#444"/><rect x="0" y="7" width="1.6" height="1.6" fill="#444"/></svg>
<div style="left:1084px;top:391px;width:446px;height:1px;background:#acacac;"></div>
<div class="t" style="left:1099.5px;top:399.3px;font-size:10px;color:#111;">Position</div>
<div class="t" style="left:1269.6px;top:399.3px;font-size:10px;color:#222;">X</div>
<div style="left:1281.8px;top:396.0px;width:70.0px;height:11.800000000000011px;background:#e3e3e3;border-radius:2px;border-bottom:1px solid #b0b0b0;box-shadow:inset 0 1px 0 #a2a2a2;"></div>
<div class="t" style="left:1283.8px;top:399.3px;font-size:10px;color:#111;">0</div>
<div class="t" style="left:1355.8px;top:399.3px;font-size:10px;color:#222;">Y</div>
<div style="left:1368.2px;top:396.0px;width:69.59999999999991px;height:11.800000000000011px;background:#e3e3e3;border-radius:2px;border-bottom:1px solid #b0b0b0;box-shadow:inset 0 1px 0 #a2a2a2;"></div>
<div class="t" style="left:1370.2px;top:399.3px;font-size:10px;color:#111;">0</div>
<div class="t" style="left:1443.8px;top:399.3px;font-size:10px;color:#222;">Z</div>
<div style="left:1456px;top:396.0px;width:69.79999999999995px;height:11.800000000000011px;background:#e3e3e3;border-radius:2px;border-bottom:1px solid #b0b0b0;box-shadow:inset 0 1px 0 #a2a2a2;"></div>
<div class="t" style="left:1458px;top:399.3px;font-size:10px;color:#111;">0</div>
<div class="t" style="left:1099.5px;top:415.3px;font-size:10px;color:#111;">Rotat on</div>
<div class="t" style="left:1269.6px;top:415.3px;font-size:10px;color:#222;">X</div>
<div style="left:1281.8px;top:412.0px;width:70.0px;height:11.800000000000011px;background:#e3e3e3;border-radius:2px;border-bottom:1px solid #b0b0b0;box-shadow:inset 0 1px 0 #a2a2a2;"></div>
<div class="t" style="left:1283.8px;top:415.3px;font-size:10px;color:#111;">0</div>
<div class="t" style="left:1355.8px;top:415.3px;font-size:10px;color:#222;">Y</div>
<div style="left:1368.2px;top:412.0px;width:69.59999999999991px;height:11.800000000000011px;background:#e3e3e3;border-radius:2px;border-bottom:1px solid #b0b0b0;box-shadow:inset 0 1px 0 #a2a2a2;"></div>
<div class="t" style="left:1370.2px;top:415.3px;font-size:10px;color:#111;">0</div>
<div class="t" style="left:1443.8px;top:415.3px;font-size:10px;color:#222;">Z</div>
<div style="left:1456px;top:412.0px;width:69.79999999999995px;height:11.800000000000011px;background:#e3e3e3;border-radius:2px;border-bottom:1px solid #b0b0b0;box-shadow:inset 0 1px 0 #a2a2a2;"></div>
<div class="t" style="left:1458px;top:415.3px;font-size:10px;color:#111;">0</div>
<div class="t" style="left:1099.5px;top:431.2px;font-size:10px;color:#111;">Scale</div>
<div class="t" style="left:1269.6px;top:431.2px;font-size:10px;color:#222;">X</div>
<div style="left:1281.8px;top:427.90000000000003px;width:70.0px;height:11.800000000000011px;background:#e3e3e3;border-radius:2px;border-bottom:1px solid #b0b0b0;box-shadow:inset 0 1px 0 #a2a2a2;"></div>
<div class="t" style="left:1283.8px;top:431.2px;font-size:10px;color:#111;">1</div>
<div class="t" style="left:1355.8px;top:431.2px;font-size:10px;color:#222;">Y</div>
<div style="left:1368.2px;top:427.90000000000003px;width:69.59999999999991px;height:11.800000000000011px;background:#e3e3e3;border-radius:2px;border-bottom:1px solid #b0b0b0;box-shadow:inset 0 1px 0 #a2a2a2;"></div>
<div class="t" style="left:1370.2px;top:431.2px;font-size:10px;color:#111;">1</div>
<div class="t" style="left:1443.8px;top:431.2px;font-size:10px;color:#222;">Z</div>
<div style="left:1456px;top:427.90000000000003px;width:69.79999999999995px;height:11.800000000000011px;background:#e3e3e3;border-radius:2px;border-bottom:1px solid #b0b0b0;box-shadow:inset 0 1px 0 #a2a2a2;"></div>
<div class="t" style="left:1458px;top:431.2px;font-size:10px;color:#111;">1</div>
<svg style="position:absolute;left:1251px;top:430px;" width="13" height="9" viewBox="0 0 13 9"><ellipse cx="4.5" cy="4" rx="3.5" ry="2.6" stroke="#666" fill="none" stroke-width="0.9"/><ellipse cx="8.5" cy="5" rx="3.5" ry="2.6" stroke="#666" fill="none" stroke-width="0.9"/></svg>
<div style="left:1084px;top:449.1px;width:446px;height:1.3px;background:#8a8a8a;"></div>
<div style="left:1084px;top:450.4px;width:446px;height:16.0px;background:#c6c6c6;"></div>
<svg style="position:absolute;left:1089.5px;top:455.9px" width="6.5" height="5"><polygon points="0,0 6.5,0 3.25,5" fill="#6a6a6a"/></svg>
<svg style="position:absolute;left:1101.6px;top:452.5px" width="11" height="12"><path d="M1 0.5H7.5L10.5 3.5V11.5H1Z" fill="#f4f4f4" stroke="#bbb" stroke-width="0.6"/><path d="M4 3.5L3.5 9M6.5 3.5L6 9M2.5 5.3H7.5M2.3 7.3H7.3" stroke="#2e8a2e" stroke-width="0.9"/></svg>
<div style="left:1116.7px;top:453.4px;width:10.5px;height:10px;background:#e6e6e6;border-radius:1.5px;box-shadow:0 0 0 0.5px #b0b0b0"></div>
<svg style="position:absolute;left:1118.2px;top:454.9px;" width="8" height="7" viewBox="0 0 8 7"><path d="M1 3.8L3 6L7 1" stroke="#222" fill="none" stroke-width="1.2"/></svg>
<div class="t" style="left:1132.6px;top:454.5px;font-size:10px;color:#111;font-weight:bold;">Moving (Script)</div>
<svg style="position:absolute;left:1482.7px;top:454.09999999999997px;" width="9" height="9" viewBox="0 0 9 9"><circle cx="4.3" cy="4.3" r="4.1" fill="#505050"/><path d="M3 3.2A1.4 1.4 0 1 1 4.4 4.8V5.6" stroke="#c8c8c8" fill="none" stroke-width="1"/><rect x="3.9" y="6.6" width="1" height="1" fill="#c8c8c8"/></svg>
<svg style="position:absolute;left:1498.5px;top:453.9px;" width="10" height="9" viewBox="0 0 10 9"><rect x="5.5" y="0.5" width="1.5" height="4" fill="#444"/><rect x="2.5" y="4.5" width="1.5" height="4" fill="#444"/><path d="M4 2.5H9" stroke="#444" stroke-width="1.1"/></svg>
<svg style="position:absolute;left:1518.5px;top:454.2px;" width="2" height="9" viewBox="0 0 2 9"><rect x="0" y="0" width="1.6" height="1.6" fill="#444"/><rect x="0" y="3.5" width="1.6" height="1.6" fill="#444"/><rect x="0" y="7" width="1.6" height="1.6" fill="#444"/></svg>
<div style="left:1084px;top:466.4px;width:446px;height:1px;background:#acacac;"></div>
<div class="t" style="left:1099.7px;top:472.8px;font-size:10px;color:#888;">Script</div>
<div style="left:1274.8px;top:470px;width:251.20000000000005px;height:12.199999999999989px;background:#d0d0d0;border-radius:2px;border-bottom:1px solid #b0b0b0;box-shadow:inset 0 1px 0 #a2a2a2;border-bottom-color:#bbb"></div>
<svg style="position:absolute;left:1278px;top:472px;" width="6" height="9" viewBox="0 0 6 9"><rect x="0.3" y="0.3" width="5.4" height="8.4" fill="#f0f0f0" stroke="#ccc" stroke-width="0.5"/><path d="M2 2L1.7 7M4 2L3.7 7M1 3.8H5M1 5.5H5" stroke="#7cb87c" stroke-width="0.6"/></svg>
<div class="t" style="left:1288px;top:472.8px;font-size:10px;color:#888;">Moving</div>
<svg style="position:absolute;left:1512px;top:472.5px;" width="9" height="9" viewBox="0 0 9 9"><circle cx="4.5" cy="4.5" r="3.8" stroke="#999" fill="none" stroke-width="0.8"/><circle cx="4.5" cy="4.5" r="1" fill="#999"/></svg>
<div style="left:1084px;top:490.6px;width:446px;height:1.3px;background:#8a8a8a;"></div>
<div style="left:1084px;top:491.9px;width:446px;height:15.600000000000023px;background:#c6c6c6;"></div>
<svg style="position:absolute;left:1089.5px;top:497.2px" width="6.5" height="5"><polygon points="0,0 6.5,0 3.25,5" fill="#6a6a6a"/></svg>
<svg style="position:absolute;left:1101px;top:493.5px" width="12" height="12"><circle cx="6" cy="6" r="5.3" fill="#2e8a2e"/><path d="M6 1V11M1 6H11" stroke="#c8c8c8" stroke-width="1.2"/><path d="M6 6H10.8A4.8 4.8 0 0 1 6 10.8Z" fill="#f0f0f0"/><path d="M6 6H1.2A4.8 4.8 0 0 1 6 1.2Z" fill="#f0f0f0"/></svg>
<div class="t" style="left:1132.6px;top:495.8px;font-size:10px;color:#111;font-weight:bold;">Rigidbody</div>
<svg style="position:absolute;left:1482.7px;top:495.4px;" width="9" height="9" viewBox="0 0 9 9"><circle cx="4.3" cy="4.3" r="4.1" fill="#505050"/><path d="M3 3.2A1.4 1.4 0 1 1 4.4 4.8V5.6" stroke="#c8c8c8" fill="none" stroke-width="1"/><rect x="3.9" y="6.6" width="1" height="1" fill="#c8c8c8"/></svg>
<svg style="position:absolute;left:1498.5px;top:495.2px;" width="10" height="9" viewBox="0 0 10 9"><path d="M0.5 2.5H9.5M0.5 6.5H9.5" stroke="#444" stroke-width="1.1"/><rect x="5.5" y="0.5" width="1.5" height="4" fill="#444"/><rect x="2.5" y="4.5" width="1.5" height="4" fill="#444"/></svg>
<svg style="position:absolute;left:1518.5px;top:495.5px;" width="2" height="9" viewBox="0 0 2 9"><rect x="0" y="0" width="1.6" height="1.6" fill="#444"/><rect x="0" y="3.5" width="1.6" height="1.6" fill="#444"/><rect x="0" y="7" width="1.6" height="1.6" fill="#444"/></svg>
<div style="left:1084px;top:507.5px;width:446px;height:1px;background:#acacac;"></div>
<div class="t" style="left:1099.5px;top:514.9px;font-size:10px;color:#111;">Mass</div>
<div class="t" style="left:1099.5px;top:530.9px;font-size:10px;color:#111;">Drag</div>
<div class="t" style="left:1099.5px;top:546.9px;font-size:10px;color:#111;">Angular Drag</div>
<div class="t" style="left:1099.5px;top:562.9px;font-size:10px;color:#111;">Automatic Center Of Mass</div>
<div class="t" style="left:1099.5px;top:578.9px;font-size:10px;color:#111;">Automatic Tensor</div>
<div class="t" style="left:1099.5px;top:594.9px;font-size:10px;color:#111;">Use Gravity</div>
<div class="t" style="left:1099.5px;top:610.9px;font-size:10px;color:#111;">Is Kinematic</div>
<div class="t" style="left:1099.5px;top:626.9px;font-size:10px;color:#111;">Interpolate</div>
<div class="t" style="left:1099.5px;top:642.9px;font-size:10px;color:#111;">Collision Detection</div>
<div style="left:1269.8px;top:511.49999999999994px;width:256.20000000000005px;height:11.900000000000034px;background:#e3e3e3;border-radius:2px;border-bottom:1px solid #b0b0b0;box-shadow:inset 0 1px 0 #a2a2a2;"></div>
<div class="t" style="left:1272px;top:514.9px;font-size:10px;color:#111;">1</div>
<div style="left:1269.8px;top:527.5px;width:256.20000000000005px;height:11.899999999999977px;background:#e3e3e3;border-radius:2px;border-bottom:1px solid #b0b0b0;box-shadow:inset 0 1px 0 #a2a2a2;"></div>
<div class="t" style="left:1272px;top:530.9px;font-size:10px;color:#111;">0</div>
<div style="left:1269.8px;top:543.5px;width:256.20000000000005px;height:11.899999999999977px;background:#e3e3e3;border-radius:2px;border-bottom:1px solid #b0b0b0;box-shadow:inset 0 1px 0 #a2a2a2;"></div>
<div class="t" style="left:1272px;top:546.9px;font-size:10px;color:#111;">0.05</div>
<div style="left:1269.8px;top:561.5px;width:9.5px;height:9.5px;background:#e6e6e6;border-radius:1.5px;box-shadow:0 0 0 0.5px #b0b0b0"></div>
<svg style="position:absolute;left:1271.3px;top:563.0px;" width="8" height="7" viewBox="0 0 8 7"><path d="M1 3.8L3 6L7 1" stroke="#222" fill="none" stroke-width="1.2"/></svg>
<div style="left:1269.8px;top:577.5px;width:9.5px;height:9.5px;background:#e6e6e6;border-radius:1.5px;box-shadow:0 0 0 0.5px #b0b0b0"></div>
<svg style="position:absolute;left:1271.3px;top:579.0px;" width="8" height="7" viewBox="0 0 8 7"><path d="M1 3.8L3 6L7 1" stroke="#222" fill="none" stroke-width="1.2"/></svg>
<div style="left:1269.8px;top:593.5px;width:9.5px;height:9.5px;background:#e6e6e6;border-radius:1.5px;box-shadow:0 0 0 0.5px #b0b0b0"></div>
<svg style="position:absolute;left:1271.3px;top:595.0px;" width="8" height="7" viewBox="0 0 8 7"><path d="M1 3.8L3 6L7 1" stroke="#222" fill="none" stroke-width="1.2"/></svg>
<div style="left:1269.8px;top:609.5px;width:9.5px;height:9.5px;background:#e6e6e6;border-radius:1.5px;box-shadow:0 0 0 0.5px #b0b0b0"></div>
<div style="left:1269.8px;top:624.1px;width:256.20000000000005px;height:11.799999999999955px;background:#d6d6d6;border-radius:2px;border-bottom:1px solid #b0b0b0;box-shadow:inset 0 1px 0 #a2a2a2;"></div>
<div class="t" style="left:1272px;top:626.7px;font-size:10px;color:#111;">None</div>
<svg style="position:absolute;left:1515px;top:629.1px" width="6" height="3.5"><polygon points="0,0 6,0 3.0,3.5" fill="#444"/></svg>
<div style="left:1269.8px;top:640.1px;width:256.20000000000005px;height:11.799999999999955px;background:#d6d6d6;border-radius:2px;border-bottom:1px solid #b0b0b0;box-shadow:inset 0 1px 0 #a2a2a2;"></div>
<div class="t" style="left:1272px;top:642.7px;font-size:10px;color:#111;">Discrete</div>
<svg style="position:absolute;left:1515px;top:645.1px" width="6" height="3.5"><polygon points="0,0 6,0 3.0,3.5" fill="#444"/></svg>
<svg style="position:absolute;left:1091px;top:659.8px" width="4.5" height="6"><polygon points="0,0 4.5,3.0 0,6" fill="#666"/></svg>
<div class="t" style="left:1099.5px;top:658.9px;font-size:10px;color:#111;">Constraints</div>
<svg style="position:absolute;left:1091px;top:675.7px" width="4.5" height="6"><polygon points="0,0 4.5,3.0 0,6" fill="#666"/></svg>
<div class="t" style="left:1099.5px;top:674.8px;font-size:10px;color:#111;">Layer Overrides</div>
<div style="left:1084px;top:690.8px;width:446px;height:1.3px;background:#8a8a8a;"></div>
<div style="left:1084px;top:692px;width:446px;height:17px;background:#c6c6c6;"></div>
<svg style="position:absolute;left:1091px;top:697.8px" width="4.5" height="6"><polygon points="0,0 4.5,3.0 0,6" fill="#666"/></svg>
<svg style="position:absolute;left:1100.5px;top:694.5px;" width="12" height="12" viewBox="0 0 12 12"><rect x="0.8" y="0.8" width="10.4" height="10.4" stroke="#2e6ad6" fill="none" stroke-width="1.2"/><path d="M3.5 1V11M3.5 8.5H11" stroke="#2e6ad6" stroke-width="1.2"/></svg>
<div class="t" style="left:1132.6px;top:696.9px;font-size:10px;color:#111;font-weight:bold;">Cube (Mesh Filter)</div>
<svg style="position:absolute;left:1482.7px;top:696.5px;" width="9" height="9" viewBox="0 0 9 9"><circle cx="4.3" cy="4.3" r="4.1" fill="#505050"/><path d="M3 3.2A1.4 1.4 0 1 1 4.4 4.8V5.6" stroke="#c8c8c8" fill="none" stroke-width="1"/><rect x="3.9" y="6.6" width="1" height="1" fill="#c8c8c8"/></svg>
<svg style="position:absolute;left:1498.5px;top:696.3px;" width="10" height="9" viewBox="0 0 10 9"><rect x="5.5" y="0.5" width="1.5" height="4" fill="#444"/><rect x="2.5" y="4.5" width="1.5" height="4" fill="#444"/><path d="M4 2.5H9" stroke="#444" stroke-width="1.1"/></svg>
<svg style="position:absolute;left:1518.5px;top:696.5999999999999px;" width="2" height="9" viewBox="0 0 2 9"><rect x="0" y="0" width="1.6" height="1.6" fill="#444"/><rect x="0" y="3.5" width="1.6" height="1.6" fill="#444"/><rect x="0" y="7" width="1.6" height="1.6" fill="#444"/></svg>
<div style="left:1084px;top:709.1px;width:446px;height:1.3px;background:#8a8a8a;"></div>
<div style="left:1084px;top:710.4px;width:446px;height:33px;background:#c6c6c6;"></div>
<svg style="position:absolute;left:1091px;top:715.4px" width="4.5" height="6"><polygon points="0,0 4.5,3.0 0,6" fill="#666"/></svg>
<svg style="position:absolute;left:1091px;top:732.6px" width="4.5" height="6"><polygon points="0,0 4.5,3.0 0,6" fill="#666"/></svg>
<svg style="position:absolute;left:1100.5px;top:712.5px;" width="12" height="12" viewBox="0 0 12 12"><rect x="0.8" y="0.8" width="10.4" height="10.4" stroke="#2e6ad6" fill="none" stroke-width="1.2"/><path d="M3.5 1V11M1 3.5H11" stroke="#2e6ad6" stroke-width="1.2"/><circle cx="7.5" cy="8" r="2" stroke="#555" fill="none" stroke-width="1"/></svg>
<div style="left:1116.7px;top:713.4px;width:10.5px;height:10px;background:#e6e6e6;border-radius:1.5px;box-shadow:0 0 0 0.5px #b0b0b0"></div>
<svg style="position:absolute;left:1118.2px;top:714.9px;" width="8" height="7" viewBox="0 0 8 7"><path d="M1 3.8L3 6L7 1" stroke="#222" fill="none" stroke-width="1.2"/></svg>
<div class="t" style="left:1132.6px;top:714.5px;font-size:10px;color:#111;font-weight:bold;">Mesh Renderer</div>
<svg style="position:absolute;left:1482.7px;top:714.1px;" width="9" height="9" viewBox="0 0 9 9"><circle cx="4.3" cy="4.3" r="4.1" fill="#505050"/><path d="M3 3.2A1.4 1.4 0 1 1 4.4 4.8V5.6" stroke="#c8c8c8" fill="none" stroke-width="1"/><rect x="3.9" y="6.6" width="1" height="1" fill="#c8c8c8"/></svg>
<svg style="position:absolute;left:1498.5px;top:713.9px;" width="10" height="9" viewBox="0 0 10 9"><path d="M0.5 2.5H9.5M0.5 6.5H9.5" stroke="#444" stroke-width="1.1"/><rect x="5.5" y="0.5" width="1.5" height="4" fill="#444"/><rect x="2.5" y="4.5" width="1.5" height="4" fill="#444"/></svg>
<svg style="position:absolute;left:1518.5px;top:714.1999999999999px;" width="2" height="9" viewBox="0 0 2 9"><rect x="0" y="0" width="1.6" height="1.6" fill="#444"/><rect x="0" y="3.5" width="1.6" height="1.6" fill="#444"/><rect x="0" y="7" width="1.6" height="1.6" fill="#444"/></svg>
<svg style="position:absolute;left:1100.5px;top:729.5px;" width="12" height="12" viewBox="0 0 12 12"><path d="M6 0.5L11.5 3V9L6 11.5L0.5 9V3Z" fill="#2e8a2e"/><path d="M0.5 3L6 5.5L11.5 3M6 5.5V11.5" stroke="#c8c8c8" stroke-width="0.8" fill="none"/></svg>
<div style="left:1116.7px;top:730.6px;width:10.5px;height:10px;background:#e6e6e6;border-radius:1.5px;box-shadow:0 0 0 0.5px #b0b0b0"></div>
<svg style="position:absolute;left:1118.2px;top:732.1px;" width="8" height="7" viewBox="0 0 8 7"><path d="M1 3.8L3 6L7 1" stroke="#222" fill="none" stroke-width="1.2"/></svg>
<div class="t" style="left:1132.6px;top:731.7px;font-size:10px;color:#111;font-weight:bold;">Box Collider</div>
<svg style="position:absolute;left:1482.7px;top:731.3000000000001px;" width="9" height="9" viewBox="0 0 9 9"><circle cx="4.3" cy="4.3" r="4.1" fill="#505050"/><path d="M3 3.2A1.4 1.4 0 1 1 4.4 4.8V5.6" stroke="#c8c8c8" fill="none" stroke-width="1"/><rect x="3.9" y="6.6" width="1" height="1" fill="#c8c8c8"/></svg>
<svg style="position:absolute;left:1498.5px;top:731.1px;" width="10" height="9" viewBox="0 0 10 9"><path d="M0.5 2.5H9.5M0.5 6.5H9.5" stroke="#444" stroke-width="1.1"/><rect x="5.5" y="0.5" width="1.5" height="4" fill="#444"/><rect x="2.5" y="4.5" width="1.5" height="4" fill="#444"/></svg>
<svg style="position:absolute;left:1518.5px;top:731.4px;" width="2" height="9" viewBox="0 0 2 9"><rect x="0" y="0" width="1.6" height="1.6" fill="#444"/><rect x="0" y="3.5" width="1.6" height="1.6" fill="#444"/><rect x="0" y="7" width="1.6" height="1.6" fill="#444"/></svg>
<div style="left:1084px;top:743.1px;width:446px;height:1.3px;background:#8a8a8a;"></div>
<div style="left:1084px;top:744.4px;width:446px;height:43px;background:#c4c4c4;"></div>
<div style="left:1097.2px;top:749.3px;width:26px;height:25.4px;background:#c0c0c0"></div>
<div style="left:1098.5px;top:750px;width:23.5px;height:23.5px;border-radius:50%;background:radial-gradient(circle at 33% 30%,#f8f8f8 0%,#c8c8c8 15%,#8a8a8a 50%,#4a4a4a 85%,#2e2e2e 100%)"></div>
<div class="t" style="left:1129.2px;top:751.09px;font-size:11.3px;color:#111;">Default-Material (Material)</div>
<svg style="position:absolute;left:1506px;top:751px;" width="9" height="9" viewBox="0 0 9 9"><circle cx="4.5" cy="4.5" r="4.1" fill="#505050"/><path d="M3.2 3.2A1.4 1.4 0 1 1 4.6 4.8V5.6" stroke="#c8c8c8" fill="none" stroke-width="1"/><rect x="4.1" y="6.6" width="1" height="1" fill="#c8c8c8"/></svg>
<svg style="position:absolute;left:1522px;top:751px;" width="2" height="9" viewBox="0 0 2 9"><rect x="0" y="0" width="1.6" height="1.6" fill="#444"/><rect x="0" y="3.5" width="1.6" height="1.6" fill="#444"/><rect x="0" y="7" width="1.6" height="1.6" fill="#444"/></svg>
<svg style="position:absolute;left:1090px;top:775px" width="5" height="7"><polygon points="0,0 5,3.5 0,7" fill="#777"/></svg>
<div class="t" style="left:1127.7px;top:770.4px;font-size:10px;color:#8a8a8a;">Shader</div>
<div style="left:1169px;top:767.4px;width:280.5px;height:12.300000000000068px;background:#d3d3d3;border-radius:2px;border-bottom:1px solid #b0b0b0;box-shadow:inset 0 1px 0 #a2a2a2;border-bottom-color:#bdbdbd"></div>
<div class="t" style="left:1172px;top:770.1px;font-size:10px;color:#8f8f8f;">Standard</div>
<svg style="position:absolute;left:1439px;top:772.5px" width="6" height="3.5"><polygon points="0,0 6,0 3.0,3.5" fill="#999"/></svg>
<div style="left:1454.1px;top:767.3px;width:33.90000000000009px;height:11.900000000000091px;background:#e3e3e3;border-radius:2px;border-bottom:1px solid #b0b0b0;box-shadow:inset 0 1px 0 #a2a2a2;border-bottom-color:#8a8a8a"></div>
<div class="t" style="left:1458px;top:770.1px;font-size:10px;color:#111;">Edit...</div>
<div style="left:1492px;top:767.3px;width:33.59999999999991px;height:11.900000000000091px;background:#e3e3e3;border-radius:2px;border-bottom:1px solid #b0b0b0;box-shadow:inset 0 1px 0 #a2a2a2;border-bottom-color:#8a8a8a"></div>
<svg style="position:absolute;left:1498px;top:770px;" width="10" height="8" viewBox="0 0 10 8"><path d="M2 1H3M4 4H9M4 7H9" stroke="#444" stroke-width="0.9"/></svg>
<svg style="position:absolute;left:1515px;top:772px" width="6" height="3.5"><polygon points="0,0 6,0 3.0,3.5" fill="#444"/></svg>
<div style="left:1084px;top:787.3px;width:446px;height:1.3px;background:#8a8a8a;"></div>
<div style="left:1084px;top:796.1px;width:446px;height:1px;background:#999;"></div>
<div style="left:1215.3px;top:804px;width:182.5px;height:13px;background:#dedede;border-radius:3px 3px 0 0;box-shadow:0 0 0 0.5px #aaa"></div>
<div class="t" style="left:1270px;top:808.1px;font-size:10px;color:#111;">Add Component</div>
<div style="left:0px;top:816px;width:1540px;height:18px;background:#828282;"></div>
<div style="left:1456px;top:817px;width:0.8px;height:17px;background:#7a7a7a;"></div>
<div style="left:1476.6px;top:817px;width:0.8px;height:17px;background:#7a7a7a;"></div>
<div style="left:1497.5px;top:817px;width:0.8px;height:17px;background:#7a7a7a;"></div>
<div style="left:1518.3px;top:817px;width:0.8px;height:17px;background:#7a7a7a;"></div>
<svg style="position:absolute;left:1460px;top:820px;" width="11" height="11" viewBox="0 0 11 11"><ellipse cx="5.5" cy="6.5" rx="3.5" ry="4" fill="#5c5c5c"/><path d="M1 4L3 5M10 4L8 5M1 7H3M10 7H8M1 10L3 9M10 10L8 9M4 2L5 3.5M7 2L6 3.5" stroke="#5c5c5c"/></svg>
<svg style="position:absolute;left:1481px;top:820px;" width="11" height="11" viewBox="0 0 11 11"><ellipse cx="5.5" cy="3" rx="4.5" ry="2" fill="#5c5c5c"/><path d="M1 5.5Q5.5 8 10 5.5M1 8Q5.5 10.5 10 8" stroke="#5c5c5c" fill="none" stroke-width="1.3"/></svg>
<svg style="position:absolute;left:1502px;top:820px;" width="11" height="11" viewBox="0 0 11 11"><circle cx="5.5" cy="5.5" r="3" stroke="#5c5c5c" fill="none" stroke-width="1.2"/><path d="M1 1H3M8 1H10M1 10H3M8 10H10M1 1V3M10 1V3M1 10V8M10 10V8" stroke="#5c5c5c"/></svg>
<svg style="position:absolute;left:1523px;top:820px;" width="12" height="12" viewBox="0 0 12 12"><circle cx="6" cy="6" r="5" stroke="#5c5c5c" fill="none"/><path d="M3.5 6L5.5 8L8.5 4" stroke="#5c5c5c" fill="none"/></svg>
<div style="left:0px;top:737px;width:1083px;height:2px;background:#8b8b8b;"></div>
<div style="left:0px;top:739px;width:1083px;height:14.5px;background:#9d9d9d;"></div>
<div style="left:0px;top:752.5px;width:1083px;height:1px;background:#8e8e8e;"></div>
<div style="left:0px;top:739px;width:64px;height:14.5px;background:#c6c6c6;"></div>
<svg style="position:absolute;left:6px;top:743px;" width="10" height="8" viewBox="0 0 10 8"><path d="M0 0.5H4L5 1.5H9.5V7.5H0Z" fill="#444"/></svg>
<div class="t" style="left:18.5px;top:743.1px;font-size:10px;color:#111;">Project</div>
<svg style="position:absolute;left:72px;top:742.5px;" width="8" height="9" viewBox="0 0 8 9"><rect x="0.5" y="0.5" width="7" height="8" stroke="#444" fill="none"/><path d="M2 3H6M2 5H6M2 7H6" stroke="#444" stroke-width="0.8"/></svg>
<div class="t" style="left:84.5px;top:743.1px;font-size:10px;color:#111;">Console</div>
<svg style="position:absolute;left:142px;top:742.5px;" width="10" height="10" viewBox="0 0 10 10"><circle cx="5" cy="5" r="4.7" fill="#444"/><path d="M5 1.5V5H8" stroke="#c6c6c6" stroke-width="1.1" fill="none"/></svg>
<div class="t" style="left:155px;top:743.1px;font-size:10px;color:#111;">An mation</div>
<svg style="position:absolute;left:1057px;top:742px;" width="7" height="8" viewBox="0 0 7 8"><path d="M1 1.5H6V4.5H1V7.5H6" stroke="#555" fill="none"/></svg>
<svg style="position:absolute;left:1071.5px;top:742.5px;" width="2" height="9" viewBox="0 0 2 9"><rect x="0" y="0" width="1.6" height="1.6" fill="#555"/><rect x="0" y="3.5" width="1.6" height="1.6" fill="#555"/><rect x="0" y="7" width="1.6" height="1.6" fill="#555"/></svg>
<div style="left:0px;top:753.5px;width:1083px;height:16.5px;background:#c4c4c4;"></div>
<svg style="position:absolute;left:5.5px;top:757px;" width="10" height="10" viewBox="0 0 10 10"><rect x="4.2" y="0" width="1.6" height="10" fill="#444"/><rect x="0" y="4.2" width="10" height="1.6" fill="#444"/></svg>
<svg style="position:absolute;left:18.8px;top:760px" width="6" height="3.5"><polygon points="0,0 6,0 3.0,3.5" fill="#555"/></svg>
<div style="left:710px;top:755px;width:248px;height:11.5px;background:#e3e3e3;border-radius:3px 0 0 3px;box-shadow:0 0 0 0.5px #999"></div>
<svg style="position:absolute;left:714px;top:757px;" width="7" height="7" viewBox="0 0 7 7"><circle cx="3" cy="3" r="2" stroke="#555" fill="none"/><path d="M4.5 4.5L6.5 6.5" stroke="#555"/></svg>
<div style="left:950px;top:755px;width:13px;height:11.5px;background:#d4d4d4;box-shadow:0 0 0 0.5px #999;border-radius:0 3px 3px 0"></div>
<svg style="position:absolute;left:952px;top:756.5px;" width="9" height="9" viewBox="0 0 9 9"><rect x="1" y="1" width="7" height="7" stroke="#444" fill="none"/><path d="M3 6L7 2M4 2H7V5" stroke="#444" fill="none"/></svg>
<div style="left:986px;top:754px;width:0.8px;height:16px;background:#aaa;"></div>
<div style="left:1006.5px;top:754px;width:0.8px;height:16px;background:#aaa;"></div>
<div style="left:1027.5px;top:754px;width:0.8px;height:16px;background:#aaa;"></div>
<div style="left:1048.5px;top:754px;width:0.8px;height:16px;background:#aaa;"></div>
<svg style="position:absolute;left:971px;top:756px;" width="11" height="11" viewBox="0 0 11 11"><circle cx="3.5" cy="7.5" r="3" fill="#444"/><rect x="2" y="0.5" width="4" height="4" fill="#444"/><path d="M6.5 4L10 7L6.5 10Z" fill="#444"/></svg>
<svg style="position:absolute;left:991px;top:757px;" width="10" height="9" viewBox="0 0 10 9"><path d="M1 5L5 1H9V5L5 9Z" fill="#444"/></svg>
<svg style="position:absolute;left:1012px;top:756px;" width="11" height="11" viewBox="0 0 11 11"><circle cx="5.5" cy="5.5" r="4.8" fill="#c9c9c9"/><rect x="5" y="2.5" width="1" height="4" fill="#bbb"/></svg>
<svg style="position:absolute;left:1033px;top:756px;" width="11" height="11" viewBox="0 0 11 11"><path d="M5.5 0.5L7 4H10.5L7.8 6.3L8.8 10L5.5 7.8L2.2 10L3.2 6.3L0.5 4H4Z" fill="#777"/></svg>
<svg style="position:absolute;left:1053px;top:757px;" width="13" height="9" viewBox="0 0 13 9"><path d="M1 4.5Q6.5 -1 12 4.5Q6.5 10 1 4.5Z" stroke="#444" fill="none"/><path d="M2 9L11 0" stroke="#444"/></svg>
<div class="t" style="left:1067px;top:757.1px;font-size:10px;color:#111;">14</div>
<div style="left:0px;top:770px;width:156px;height:46px;background:#c4c4c4;"></div>
<div style="left:0px;top:804px;width:156px;height:12px;background:#acacac;"></div>
<div style="left:0;top:771px;width:156px;height:20px;overflow:hidden"><svg style="position:absolute;left:25px;top:-4px" width="10" height="10"><circle cx="4" cy="4" r="3" stroke="#555" fill="none"/><path d="M6 6L8.5 8.5" stroke="#555"/></svg><div class="t" style="left:38.5px;top:-3.4px;font-size:10px;color:#222">All Models</div></div>
<svg style="position:absolute;left:25px;top:780px;" width="10" height="10" viewBox="0 0 10 10"><circle cx="4" cy="4" r="3" stroke="#555" fill="none"/><path d="M6 6L8.5 8.5" stroke="#555"/></svg>
<div class="t" style="left:38.5px;top:780.6px;font-size:10px;color:#222;">All Prefabs</div>
<svg style="position:absolute;left:3.5px;top:807.5px" width="6" height="5"><polygon points="0,0 6,0 3.0,5" fill="#666"/></svg>
<svg style="position:absolute;left:14px;top:805px;" width="12" height="10" viewBox="0 0 12 10"><path d="M0.5 1H4.5L5.5 2.5H10V9.5H0.5Z" stroke="#555" fill="#ddd"/><path d="M2 4.5H11.5L10 9.5H0.5Z" fill="#666"/></svg>
<div class="t" style="left:28.5px;top:805.1px;font-size:10px;color:#111;font-weight:bold;">Assets</div>
<div style="left:156px;top:770px;width:10.5px;height:46px;background:#c9c9c9;"></div>
<svg style="position:absolute;left:157.5px;top:773.5px;" width="7" height="5" viewBox="0 0 7 5"><polygon points="0,4.5 3.5,0 7,4.5" fill="#777"/></svg>
<div style="left:157.5px;top:783.5px;width:7px;height:15px;background:#9f9f9f;border-radius:3.5px"></div>
<svg style="position:absolute;left:157.5px;top:806px;" width="7" height="5" viewBox="0 0 7 5"><polygon points="0,0 3.5,4.5 7,0" fill="#777"/></svg>
<div style="left:166.5px;top:770px;width:1px;height:46px;background:#a0a0a0;"></div>
<div style="left:167.5px;top:770px;width:915.5px;height:46px;background:#c5c5c5;"></div>
<div style="left:167.5px;top:770px;width:915.5px;height:16.5px;background:#c9c9c9;"></div>
<div class="t" style="left:170.5px;top:774.5px;font-size:10px;color:#111;font-weight:bold;">Assets</div>
<div style="left:167.5px;top:786.6px;width:915.5px;height:13.2px;background:#b5b5b5;"></div>
<div style="left:273px;top:795.5px;width:51px;height:4px;background:#a6a6a6;border-radius:2px 2px 0 0"></div>
<div style="left:1073px;top:786px;width:10px;height:14px;background:#a8a8a8;"></div>
<svg style="position:absolute;left:1074.5px;top:788.5px;" width="7" height="8" viewBox="0 0 7 8"><rect x="0.5" y="0.5" width="6" height="7" fill="#555"/></svg>
<svg style="position:absolute;left:1024px;top:802px;" width="46" height="8" viewBox="0 0 46 8"><line x1="0" y1="4" x2="40" y2="4" stroke="#555" stroke-width="0.7"/><circle cx="41.5" cy="4" r="3.4" fill="#555"/></svg>
<div style="left:1074px;top:800px;width:8px;height:12px;background:#999;border-radius:4px"></div>
<div style="left:0px;top:770px;width:1083px;height:1px;background:#9c9c9c;"></div>
<div style="left:157.5px;top:96px;width:30.5px;height:136px;background:#a9a9a9;border-radius:3px"></div>
<div style="left:165.5px;top:101.5px;width:14px;height:1px;background:#3a3a3a;"></div>
<div style="left:165.5px;top:103.8px;width:14px;height:1px;background:#3a3a3a;"></div>
<div style="left:160.2px;top:111px;width:24.5px;height:15.099999999999994px;background:#d6d6d6;border-radius:1px"></div>
<div style="left:160.2px;top:127.8px;width:24.5px;height:16.000000000000014px;background:#7ea6e6;border-radius:1px"></div>
<div style="left:160.2px;top:144.7px;width:24.5px;height:15.100000000000023px;background:#d6d6d6;border-radius:1px"></div>
<div style="left:160.2px;top:161.5px;width:24.5px;height:15.099999999999994px;background:#d6d6d6;border-radius:1px"></div>
<div style="left:160.2px;top:178.3px;width:24.5px;height:15.199999999999989px;background:#d6d6d6;border-radius:1px"></div>
<div style="left:160.2px;top:195.2px;width:24.5px;height:16.0px;background:#d6d6d6;border-radius:1px"></div>
<div style="left:160.2px;top:214.5px;width:24.5px;height:13.5px;background:#d6d6d6;border-radius:1px"></div>
<svg style="position:absolute;left:165.5px;top:112.5px;" width="14" height="13" viewBox="0 0 14 13"><path d="M3.2 7.5V4.6Q3.2 3.6 4.1 3.6T5 4.6V7V2.3Q5 1.3 5.9 1.3T6.8 2.3V6.8V1.6Q6.8 0.6 7.7 0.6T8.6 1.6V6.8V2.6Q8.6 1.6 9.5 1.6T10.4 2.6V7.5Q10.8 6.2 11.6 5.4Q12.5 4.8 12.9 5.6L11 10Q9.8 12.6 7 12.6Q4 12.6 3.4 9.8Z" fill="#333"/></svg>
<svg style="position:absolute;left:165px;top:128.5px;" width="15" height="15" viewBox="0 0 15 15"><path d="M7.5 2V13M2 7.5H13" stroke="#eef3ff" stroke-width="0.8"/><path d="M6 3.2L7.5 1.5L9 3.2M6 11.8L7.5 13.5L9 11.8M3.2 6L1.5 7.5L3.2 9M11.8 6L13.5 7.5L11.8 9" stroke="#eef3ff" fill="none" stroke-width="0.8"/></svg>
<svg style="position:absolute;left:165.5px;top:145.5px;" width="14" height="14" viewBox="0 0 14 14"><path d="M4.5 2.8A5 5 0 0 0 3.5 11.5M9.5 11.2A5 5 0 0 0 10.5 2.5" stroke="#444" fill="none" stroke-width="1"/><path d="M8.8 1.2L11 2.4L9.5 4.5M5.2 12.8L3 11.6L4.5 9.5" stroke="#444" fill="none" stroke-width="1"/></svg>
<svg style="position:absolute;left:165.5px;top:162.5px;" width="14" height="14" viewBox="0 0 14 14"><path d="M1.5 5V12.5H12.5V1.5H5" stroke="#333" fill="none" stroke-width="1"/><rect x="1.5" y="9" width="3.5" height="3.5" fill="none" stroke="#333" stroke-width="1"/><path d="M6.5 7.5L10 4M7.5 3.8H10.2V6.5" stroke="#333" fill="none" stroke-width="0.9"/></svg>
<svg style="position:absolute;left:165.5px;top:179.5px;" width="14" height="14" viewBox="0 0 14 14"><rect x="1" y="1" width="2.4" height="2.4" fill="#333"/><rect x="10.6" y="1" width="2.4" height="2.4" fill="#333"/><rect x="1" y="10.6" width="2.4" height="2.4" fill="#333"/><rect x="10.6" y="10.6" width="2.4" height="2.4" fill="#333"/><path d="M4.8 2.2H9.2M4.8 11.8H9.2M2.2 4.8V9.2M11.8 4.8V9.2" stroke="#333" stroke-width="0.9"/></svg>
<svg style="position:absolute;left:165px;top:196.5px;" width="15" height="14" viewBox="0 0 15 14"><circle cx="7.5" cy="7" r="4.6" stroke="#444" fill="none" stroke-width="0.9"/><path d="M3 7H12M7.5 2.5V11.5" stroke="#444" stroke-width="0.8"/><path d="M5.5 5.5H9.5V8.5H5.5Z" stroke="#444" fill="none" stroke-width="0.6"/><path d="M1 12.8L3 11.2M14 1.2L12 2.8M1 1.5H2.5M12.5 12.5H14" stroke="#444" stroke-width="1"/></svg>
<svg style="position:absolute;left:165px;top:215.5px;" width="15" height="13" viewBox="0 0 15 13"><rect x="1" y="8" width="3" height="3" stroke="#111" fill="none" stroke-width="1.2"/><rect x="11" y="6" width="3" height="3" stroke="#111" fill="none" stroke-width="1.2"/><path d="M3 8L6 3.2H9L12 6M6 3.2V0.8M9 3.2V0.8" stroke="#111" fill="none" stroke-width="1.2"/></svg>
<div style="left:997px;top:101px;width:13px;height:1.2px;background:#444;"></div>
<div style="left:997px;top:103.8px;width:13px;height:1.2px;background:#444;"></div>
<svg style="position:absolute;left:1010px;top:100px" width="65" height="60" viewBox="1010 100 65 60">
      <text x="1034.5" y="111" font-family="Liberation Sans" font-size="8" fill="#f2f2f2">y</text>
      <text x="1051" y="129" font-family="Liberation Sans" font-size="8" fill="#f2f2f2">z</text>
      <text x="1063" y="148" font-family="Liberation Sans" font-size="8" fill="#f2f2f2">x</text>
      <path d="M1062.5 112.5V109.5A2 2 0 0 1 1066.5 109.5" stroke="#d8d8d8" fill="none" stroke-width="1"/><rect x="1062" y="111.5" width="5" height="4" fill="#d8d8d8"/>
      <polygon points="1018,141 1026,138 1034,140.5 1026,152" fill="#9c9c9c"/>
      <polygon points="1018,141 1023,151.5 1026,152" fill="#d0d0d0"/>
      <polygon points="1020.5,131.5 1030.5,134 1022,136.5" fill="#f6f6f6"/>
      <polygon points="1032,132 1039,129.5 1046,133 1045.5,141 1039,145 1032,141" fill="#c4c4c4"/>
      <polygon points="1039,137 1046,133 1045.5,141 1039,145" fill="#a8a8a8"/>
      <polygon points="1033,113.5 1044,114 1038.5,130" fill="#7ac44a"/>
      <polygon points="1033,113.5 1038.5,114 1038.5,130" fill="#92d860"/>
      <ellipse cx="1048.5" cy="131" rx="4.2" ry="3.3" fill="#3f7ee6"/>
      <polygon points="1045,138.6 1060.5,137.2 1060,148.5" fill="#c9452e"/>
      <polygon points="1036,154.5 1042.5,154.5 1039,144" fill="#f0f0f0"/>
    </svg>
<svg style="position:absolute;left:1019px;top:173px;" width="9" height="8" viewBox="0 0 9 8"><path d="M7.5 0.8L1.5 3.8L7.5 6.8M2.5 3.8H8.5" stroke="#e6e6e6" fill="none" stroke-width="0.9"/></svg>
<div class="t" style="left:1029.8px;top:173.3px;font-size:10px;color:#e4e4e4;">Persp</div>
</body></html>
